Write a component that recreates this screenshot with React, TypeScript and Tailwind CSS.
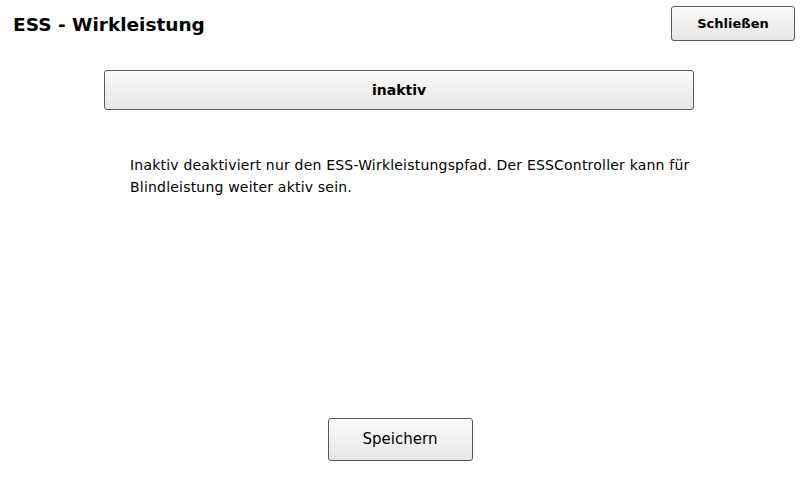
const btn =
  "flex items-center justify-center rounded-[3px] border border-[#5a5a5a] bg-gradient-to-b from-[#fafafa] to-[#e6e6e6] text-black";

export default function App() {
  return (
    <div className="relative h-[480px] w-[800px] overflow-hidden bg-white font-['DejaVu_Sans',sans-serif] text-black">
      <header className="flex items-start justify-between pl-[13px] pr-[5px] pt-[6px]">
        <h1 className="mt-[10px] text-[18.5px] font-bold leading-none">ESS - Wirkleistung</h1>
        <button className={`${btn} h-[35px] w-[124px] text-[13px] font-bold`}>Schließen</button>
      </header>

      <div className="mt-[29px] flex justify-center pr-[2px]">
        <button className={`${btn} h-[40px] w-[590px] text-[14px] font-bold`}>inaktiv</button>
      </div>

      <p className="ml-[130px] mr-[100px] mt-[44px] text-[14px] leading-[22px] tracking-[0.2px]">
        Inaktiv deaktiviert nur den ESS-Wirkleistungspfad. Der ESSController kann für Blindleistung weiter aktiv sein.
      </p>

      <div className="absolute bottom-[19px] left-0 right-0 flex justify-center">
        <button className={`${btn} h-[43px] w-[145px] text-[15px]`}>Speichern</button>
      </div>
    </div>
  );
}
